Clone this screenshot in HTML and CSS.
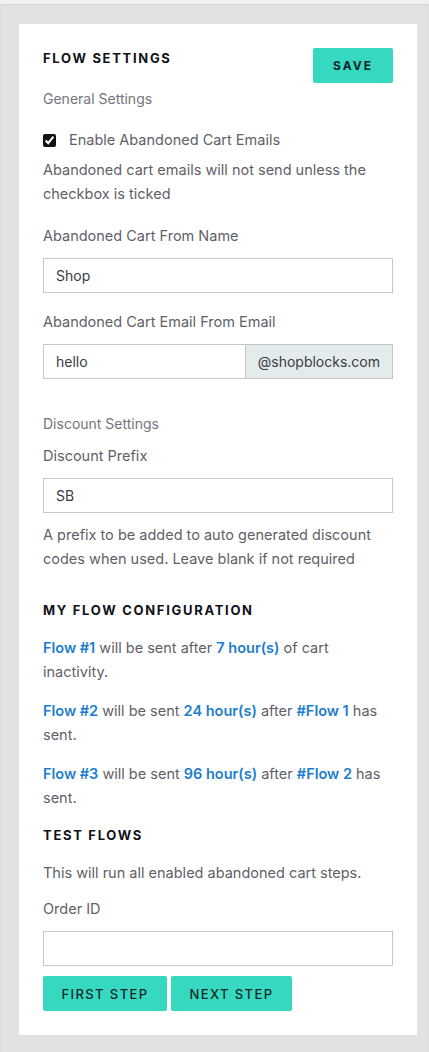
FILE: index.html
```html
<!DOCTYPE html>
<html lang="en">
<head>
    <meta charset="UTF-8">
    <meta name="viewport" content="width=device-width, initial-scale=1.0">
    <title>Flow Settings</title>
    <link rel="stylesheet" href="styles.css">
</head>
<body>
    <div class="card">
        <div class="card-head">
            <h2 class="title">Flow Settings</h2>
            <button type="button" class="btn btn-save">Save</button>
        </div>

        <p class="subhead">General Settings</p>
        <label class="check">
            <input type="checkbox" checked>
            <span>Enable Abandoned Cart Emails</span>
        </label>
        <p class="help">Abandoned cart emails will not send unless the checkbox is ticked</p>

        <label class="field-label" for="from_name">Abandoned Cart From Name</label>
        <input type="text" id="from_name" class="input" value="Shop">

        <label class="field-label" for="from_email">Abandoned Cart Email From Email</label>
        <div class="input-group">
            <input type="text" id="from_email" class="input" value="hello">
            <span class="addon">@shopblocks.com</span>
        </div>

        <p class="subhead subhead-gap">Discount Settings</p>
        <label class="field-label tight" for="prefix">Discount Prefix</label>
        <input type="text" id="prefix" class="input" value="SB">
        <p class="help">A prefix to be added to auto generated discount codes when used. Leave blank if not required</p>

        <h3 class="title section">My Flow Configuration</h3>
        <p class="flow"><b>Flow #1</b> will be sent after <b>7 hour(s)</b> of cart inactivity.</p>
        <p class="flow"><b>Flow #2</b> will be sent <b>24 hour(s)</b> after <b>#Flow 1</b> has sent.</p>
        <p class="flow"><b>Flow #3</b> will be sent <b>96 hour(s)</b> after <b>#Flow 2</b> has sent.</p>

        <h3 class="title section-test">Test Flows</h3>
        <p class="help run">This will run all enabled abandoned cart steps.</p>
        <label class="field-label order" for="order_id">Order ID</label>
        <input type="text" id="order_id" class="input">
        <div class="actions">
            <button type="button" class="btn btn-step">First Step</button>
            <button type="button" class="btn btn-step">Next Step</button>
        </div>
    </div>
</body>
</html>
```

FILE: styles.css
```css
html {
    background: #e2e2e2;
}
body {
    margin: 0;
    padding: 20px 12px 18px 19px;
    border-top: 4px solid #f0f0f0;
    box-shadow: inset 0 1px 2px rgba(0, 0, 0, 0.06);
    font-family: Inter, "Open Sans", sans-serif;
    font-size: 14.5px;
    color: #5f5f68;
}
.card {
    background: white;
    padding: 24px;
    display: flex;
    flex-direction: column;
}
.card-head {
    display: flex;
    justify-content: space-between;
    align-items: flex-start;
}
.title {
    margin: 0;
    font-size: 13px;
    font-weight: 700;
    letter-spacing: 1.7px;
    text-transform: uppercase;
    color: #111118;
}
.card-head .title {
    margin-top: 2px;
}
.btn {
    border: none;
    border-radius: 2px;
    background: #36d9bf;
    color: #15262a;
    font-family: inherit;
    text-transform: uppercase;
    cursor: pointer;
    padding: 0;
    height: 35px;
}
.btn-save {
    width: 80px;
    font-size: 12px;
    font-weight: 700;
    letter-spacing: 2px;
}
.subhead {
    margin: 6px 0 0;
    font-size: 14px;
    color: #75757d;
    line-height: 20px;
}
.subhead-gap {
    margin-top: 35px;
}
.check {
    display: flex;
    align-items: center;
    margin-top: 20px;
    line-height: 22px;
}
.check input {
    width: 13px;
    height: 13px;
    margin: 0 13px 0 0;
    accent-color: #111118;
}
.help {
    margin: 7px 0 0;
    line-height: 24px;
}
.input + .help {
    margin-top: 10px;
}
.field-label {
    display: block;
    margin-top: 18px;
    line-height: 22px;
}
.help + .field-label {
    margin-top: 19px;
}
.field-label.tight {
    margin-top: 11px;
}
.field-label.order {
    margin-top: 13px;
}
.input {
    box-sizing: border-box;
    width: 100%;
    height: 35px;
    margin-top: 11px;
    padding: 0 12px;
    border: 1px solid #c6c6c6;
    border-radius: 0;
    font-family: inherit;
    font-size: 14px;
    color: #3b3b44;
    background: white;
}
.input-group {
    display: flex;
    margin-top: 11px;
}
.input-group .input {
    margin-top: 0;
    flex: 1;
    min-width: 0;
}
.addon {
    display: flex;
    align-items: center;
    padding: 0 12px;
    height: 35px;
    box-sizing: border-box;
    border: 1px solid #c6c6c6;
    border-left: none;
    background: #e4ebed;
    font-size: 14px;
    color: #3b3b44;
}
.section {
    margin-top: 31px;
}
.flow {
    margin: 18px 0 0;
    line-height: 24px;
}
.flow + .flow {
    margin-top: 15px;
}
.flow b {
    color: #1d7dcc;
    font-weight: 600;
}
.section-test {
    margin-top: 17px;
}
.run {
    margin-top: 18px;
}
.actions {
    display: flex;
    gap: 4px;
    margin-top: 10px;
}
.btn-step {
    width: 124px;
    font-size: 13px;
    font-weight: 500;
    letter-spacing: 1.4px;
}
.btn-step + .btn-step {
    width: 121px;
}
```
